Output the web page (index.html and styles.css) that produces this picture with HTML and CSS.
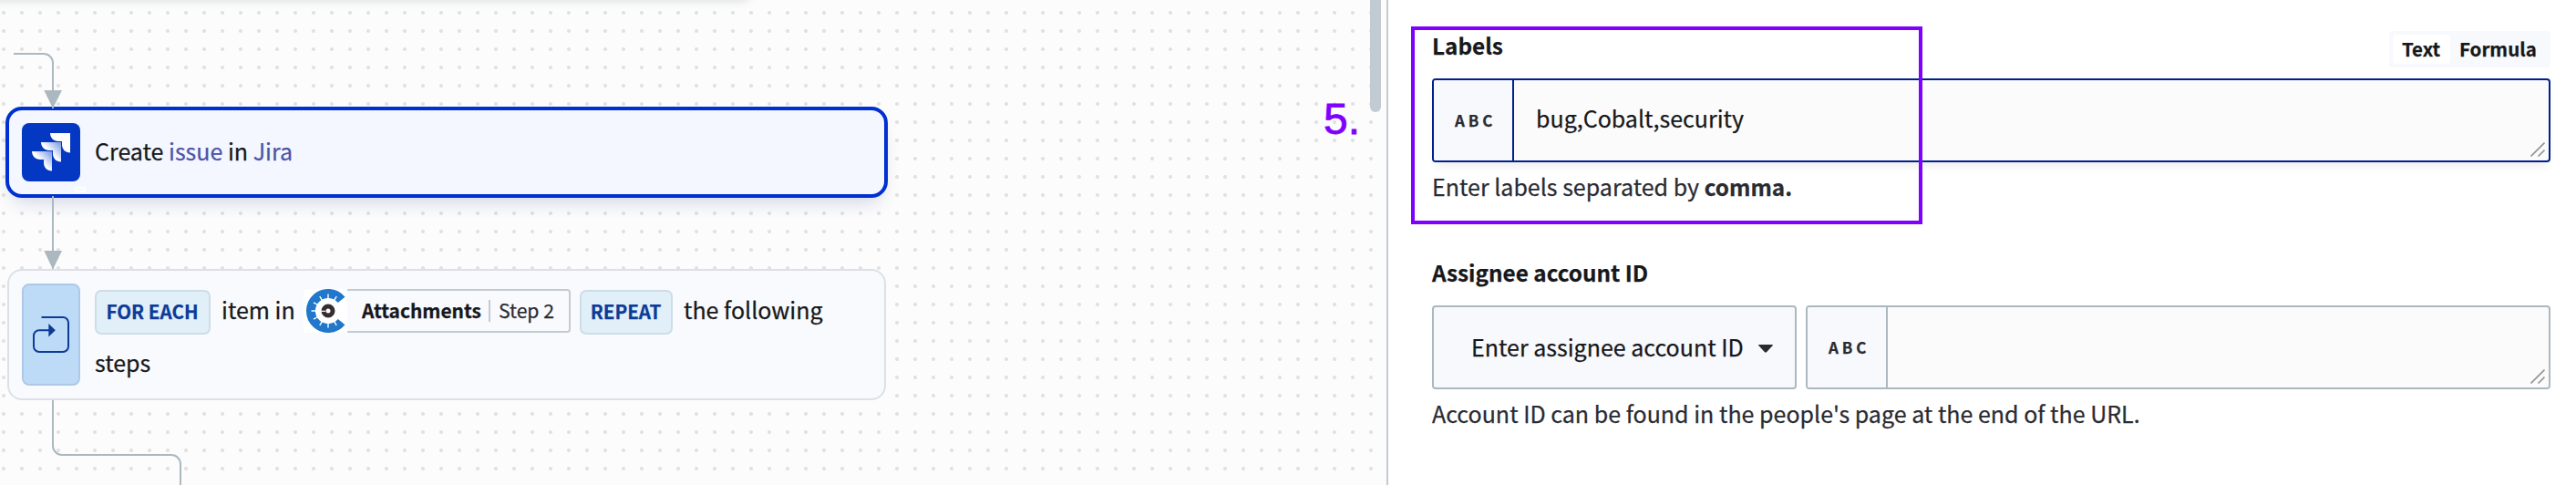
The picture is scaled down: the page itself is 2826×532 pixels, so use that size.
FILE: index.html
```html
<!DOCTYPE html>
<html lang="en">
<head>
<meta charset="utf-8">
<title>Recipe editor</title>
<link rel="stylesheet" href="styles.css">
</head>
<body>
<main class="editor">
  <section class="canvas">
    <div class="canvas-toolbar"></div>

    <article class="node node-action">
      <div class="node-icon jira">
        <svg width="64" height="64" viewBox="0 0 64 64">
          <defs>
            <linearGradient id="fade" x1="0.95" y1="0.05" x2="0.45" y2="0.5">
              <stop offset="0" stop-color="#7f9fe4"/>
              <stop offset="1" stop-color="#fff"/>
            </linearGradient>
          </defs>
          <path fill="#fff" d="M31 11h22v21.500c-5.500 0-9-4-9-9v-3.500h-4c-5 0-9-4-9-9z"/>
          <path fill="url(#fade)" d="M21 21h22v21.500c-5.500 0-9-4-9-9v-3.500h-4c-5 0-9-4-9-9z"/>
          <path fill="url(#fade)" d="M11 31h22v21.500c-5.500 0-9-4-9-9v-3.500h-4c-5 0-9-4-9-9z"/>
        </svg>
        <span class="node-mark"></span>
      </div>
      <p class="node-title">Create <span class="link">issue</span> in <span class="link">Jira</span></p>
    </article>

    <article class="node node-loop">
      <div class="node-icon loop">
        <svg width="40" height="40" viewBox="0 0 40 40" fill="none" stroke="#0d3a94" stroke-width="2">
          <path d="M9.500 1H33a6 6 0 0 1 6 6v26a6 6 0 0 1-6 6H7a6 6 0 0 1-6-6V21.300a6 6 0 0 1 6-6H18"/>
          <path fill="#0d3a94" stroke="none" d="M17.300 8l7.500 7.300-7.500 7.200z"/>
        </svg>
      </div>
      <div class="loop-body">
        <div class="loop-line">
          <span class="keyword for-each">FOR EACH</span>
          <span class="word item-in">item in</span>
          <span class="pill">
            <svg class="pill-logo" width="48" height="48" viewBox="0 0 48 48">
              <rect width="60" height="48" rx="4" fill="#fff"/>
              <path fill="none" stroke="#2077cb" stroke-width="10" d="M41.600 11.900A19 19 0 1 0 41.600 36.100"/>
              <g stroke="#fff" stroke-width="1.400">
                <path d="M27 11V5.500M27 37v5.500M14 24H8.500M20.500 12.700l-2.700-4.600M20.500 35.300l-2.700 4.600M15.700 17.500l-4.700-2.700M15.700 30.500l-4.700 2.700M33.500 12.700l2.700-4.600M33.500 35.300l2.700 4.600"/>
              </g>
              <circle cx="27" cy="24" r="5" fill="none" stroke="#372d30" stroke-width="5"/>
              <path stroke="#fff" stroke-width="1.200" d="M19 24.300h5"/>
            </svg>
            <span class="pill-body"><b>Attachments</b><i></i><span class="step">Step 2</span></span>
          </span>
          <span class="keyword repeat">REPEAT</span>
          <span class="word">the following</span>
        </div>
        <div class="loop-line second">steps</div>
      </div>
    </article>

    <svg class="connectors" width="220" height="532" viewBox="0 0 220 532" fill="none" stroke="#acb8c0" stroke-width="2">
      <path d="M15 59H48a10 10 0 0 1 10 10V119"/>
      <path d="M58 215V295"/>
      <path d="M58 439V489a10 10 0 0 0 10 10H188a10 10 0 0 1 10 10V532"/>
      <path fill="#acb8c0" stroke="none" d="M48.300 99H68L58.700 117.500H57.300zM48.300 275H68L58.700 294H57.300z"/>
    </svg>
    <div class="scrollbar"></div>
    <span class="callout-number">5.</span>
  </section>

  <section class="panel">
    <div class="field">
      <div class="field-head">
        <h2 class="label">Labels</h2>
        <div class="toggle"><span class="toggle-item active">Text</span><span class="toggle-item">Formula</span></div>
      </div>
      <div class="input focused">
        <span class="type">ABC</span>
        <span class="value">bug,Cobalt,security</span>
        <svg class="grip" width="16" height="16" viewBox="0 0 16 16"><path d="M0.500 15.500L15.500 .500M8.500 15.500L15.500 8.500"/></svg>
      </div>
      <p class="hint">Enter labels separated by <b>comma.</b></p>
    </div>
    <div class="field">
      <div class="field-head"><h2 class="label">Assignee account ID</h2></div>
      <div class="field-row">
        <div class="select">Enter assignee account ID
          <svg width="16" height="9" viewBox="0 0 16 9"><path fill="#2a2b31" d="M.500 0h15q.800.500 0 1.300L9 8.200q-1 .900-2 0L.500 1.300q-.800-.800 0-1.300z"/></svg>
        </div>
        <div class="input">
          <span class="type">ABC</span>
          <span class="value"></span>
          <svg class="grip" width="16" height="16" viewBox="0 0 16 16"><path d="M0.500 15.500L15.500 .500M8.500 15.500L15.500 8.500"/></svg>
        </div>
      </div>
      <p class="hint">Account ID can be found in the people's page at the end of the URL.</p>
    </div>
  </section>
  <div class="callout-box"></div>
</main>
</body>
</html>
```
FILE: styles.css
```css
* { box-sizing: border-box; }
body { margin: 0; }
svg { display: block; flex: none; }

.editor {
  position: relative;
  display: flex;
  width: 2826px;
  height: 532px;
  overflow: hidden;
  background: #fff;
  color: #17181b;
  font: 25px/36px "Noto Sans CJK SC", "Noto Sans", sans-serif;
  -webkit-text-stroke: .25px currentColor;
}

/* Canvas */
.canvas {
  position: relative;
  flex: none;
  width: 1521px;
  overflow: hidden;
  background: #fcfcfc radial-gradient(circle at 10px 10px, #e2e2e2 1.800px, transparent 2.300px) -6px 4px / 20px 20px;
}
.canvas-toolbar {
  position: absolute;
  top: -40px;
  left: -40px;
  width: 862px;
  height: 38px;
  border-radius: 8px;
  box-shadow: 0 2px 10px 2px rgba(40, 70, 50, .13);
}
.node {
  position: absolute;
  display: flex;
  border-radius: 16px;
}
.node-action {
  top: 117px;
  left: 6px;
  width: 968px;
  height: 100px;
  padding: 14px;
  gap: 16px;
  border: 4px solid #0030d1;
  border-radius: 18px;
  background: #f4f7ff;
  box-shadow: 0 12px 20px -8px rgba(20, 50, 130, .2);
}
.node-loop {
  top: 295px;
  left: 8px;
  width: 964px;
  height: 144px;
  padding: 14px;
  gap: 16px;
  border: 2px solid #dce1e6;
  background: #f9fafd;
}
.node-icon {
  position: relative;
  flex: none;
  width: 64px;
  border-radius: 8px;
}
.jira { height: 64px; background: #0438c2; }
.loop {
  display: flex;
  align-items: center;
  justify-content: center;
  border: 2px solid #adc9e7;
  background: #bddaf7;
}
.node-mark {
  position: absolute;
  right: -6px;
  bottom: -12px;
  width: 12px;
  height: 6px;
  border: 2px solid #fff;
  border-radius: 2px;
}
.node-title { margin: 12px 0 0; }
.link { color: #4c54a8; }

.loop-body { padding-top: 6px; white-space: nowrap; }
.loop-line { display: flex; align-items: flex-start; height: 50px; }
.loop-line.second { padding-top: 12px; }
.word { padding-top: 4px; }
.item-in { width: 90px; }
.keyword {
  height: 49px;
  margin-top: 1px;
  padding-right: 1px;
  border: 2px solid #cddde6;
  border-radius: 7px;
  background: #e1eff9;
  color: #0c3b98;
  font-size: 20.600px;
  font-weight: 700;
  line-height: 42px;
  text-align: center;
}
.for-each { width: 127px; margin-right: 12px; }
.repeat { width: 102px; margin: 1px 12px 0 10px; }
.pill { display: flex; height: 48px; }
.pill-body {
  display: flex;
  align-items: center;
  width: 245px;
  padding: 0 0 2px 16px;
  border: 2px solid #c2cad2;
  border-left: 0;
  border-radius: 0 4px 4px 0;
  font-size: 20.900px;
}
.pill-body i { width: 2px; height: 24px; margin: 2px 9px 0 8px; background: #c2cad2; }
.step { color: #2a2b31; font-size: 21.200px; }

.connectors { position: absolute; top: 0; left: 0; }
.scrollbar {
  position: absolute;
  top: -20px;
  right: 6px;
  width: 12px;
  height: 143px;
  border-radius: 6px;
  background: #c2cad2;
}
.callout-number {
  position: absolute;
  top: 104px;
  left: 1452px;
  color: #7f00ff;
  font: 48px/54px "Liberation Sans", Arial, sans-serif;
  -webkit-text-stroke-width: .8px;
}

/* Configuration panel */
.panel {
  flex: 1;
  padding: 31px 28px 0 48px;
  border-left: 2px solid #c2cad2;
}
.field { margin-bottom: 58px; }
.field-head { display: flex; justify-content: space-between; height: 55px; }
.label { margin: 0; font-size: 24.300px; font-weight: 700; line-height: 37px; }
.toggle {
  display: flex;
  width: 177px;
  height: 40px;
  margin-top: 3px;
  padding: 4px;
  border-radius: 4px;
  background: #f8f9fc;
  font-size: 20.500px;
  font-weight: 700;
  line-height: 31px;
}
.toggle-item { padding: 0 10px; border-radius: 4px; }
.toggle-item.active { width: 63px; background: #fff; }

.field-row { display: flex; gap: 10px; }
.input {
  position: relative;
  display: flex;
  flex: 1;
  height: 92px;
  border: 2px solid #acb8c0;
  border-radius: 4px;
  background: #fbfbfb;
}
.type {
  width: 88px;
  padding-left: 23px;
  border-right: 2px solid #acb8c0;
  border-radius: 2px 0 0 2px;
  background: #f8f9fc;
  color: #2a2b31;
  font-size: 17px;
  font-weight: 700;
  letter-spacing: 3.900px;
  line-height: 87px;
}
.input.focused { border-color: #00208c; box-shadow: 0 8px 10px -4px rgba(0, 0, 0, .08); }
.focused .type { border-color: #00208c; }
.value { padding: 23px 0 0 24px; }
.grip { position: absolute; right: 4px; bottom: 4px; stroke: #949494; stroke-width: 1.600px; }
.select {
  display: flex;
  justify-content: space-between;
  width: 400px;
  height: 92px;
  padding: 26px 24px 0 41px;
  border: 2px solid #acb8c0;
  border-radius: 4px;
  background: #f8f9fc;
  line-height: 35px;
}
.select svg { margin-top: 15px; }
.hint { height: 36px; margin: 8px 0 0; color: #2a2b31; font-size: 25.030px; }
.hint b { font-size: 24.300px; line-height: 30px; }
.callout-box {
  position: absolute;
  top: 29px;
  left: 1548px;
  width: 561px;
  height: 217px;
  border: 4px solid #7f00ff;
}
```
